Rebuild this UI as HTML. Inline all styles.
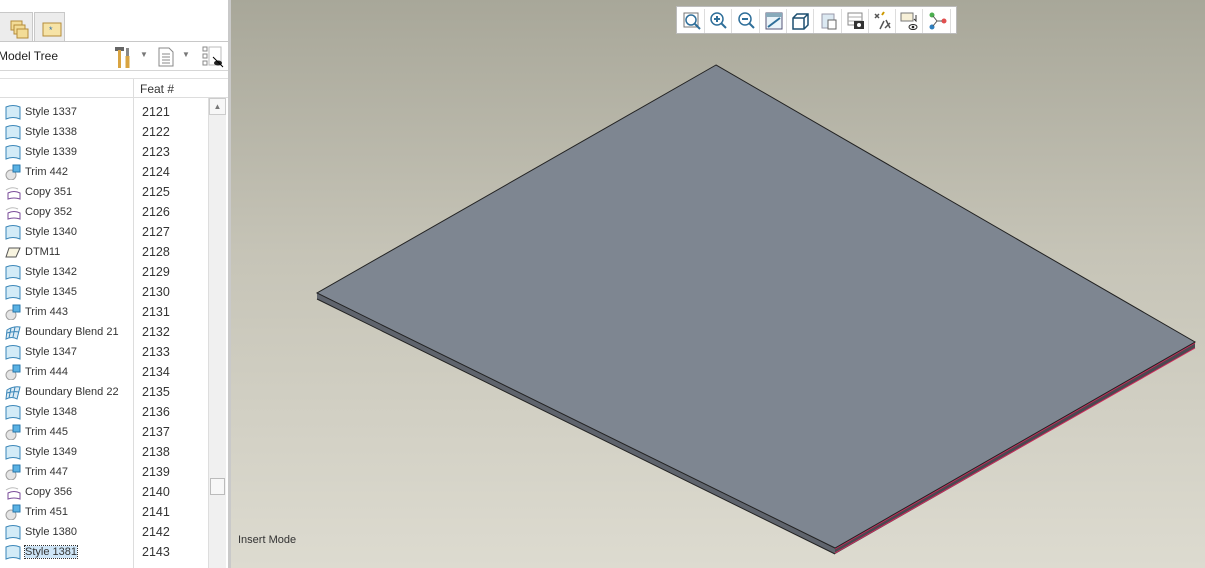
<!DOCTYPE html>
<html><head><meta charset="utf-8"><style>
*{margin:0;padding:0;box-sizing:border-box}
body{width:1205px;height:568px;overflow:hidden;position:relative;font-family:"Liberation Sans",Arial,sans-serif;background:#fff}
#left{position:absolute;left:0;top:0;width:229px;height:568px;background:#fff}
#sep{position:absolute;left:228px;top:0;width:3px;height:568px;background:#c9c9c9}
.tab{position:absolute;top:12px;height:30px;border:1px solid #c8c8c8;border-bottom:none;background:#ececec}
#tb{position:absolute;left:0;top:41px;width:228px;height:30px;border-top:1px solid #c8c8c8;border-bottom:1px solid #d6d6d6;background:#fff}
#hdr{position:absolute;left:0;top:78px;width:228px;height:20px;border-top:1px solid #e0e0e0;border-bottom:1px solid #ddd;background:#fff}
.row{position:absolute;left:0;width:208px;height:20px;font-size:11px;color:#333}
.row svg{position:absolute;left:5px;top:2px}
.row .n{position:absolute;left:25px;top:4px}
.row .f{position:absolute;left:142px;top:3px;font-size:12.5px;color:#333}
#col{position:absolute;left:133px;top:79px;width:1px;height:489px;background:#ddd}
#sb{position:absolute;left:208px;top:98px;width:18px;height:470px;background:#f0f0f0;border-left:1px solid #ddd}
#view{position:absolute;left:231px;top:0;width:974px;height:568px;background:linear-gradient(180deg,#a8a799 0%,#c6c4b7 45%,#dddbd0 100%)}
#tool{position:absolute;left:676px;top:6px;width:281px;height:28px;background:#fff;border:1px solid #bbb}
#tool div{position:absolute;top:2px;width:26px;height:24px;border-right:1px solid #ddd}
</style></head><body>
<div id="left">
<div class="tab" style="left:-2px;width:35px"><svg width="22" height="22" style="margin:6px 0 0 10px" viewBox="0 0 22 22"><rect x="2" y="2" width="11" height="9" fill="#f3dc96" stroke="#b58c3a"/><rect x="5" y="6" width="11" height="9" fill="#f3dc96" stroke="#b58c3a"/><rect x="8" y="10" width="11" height="9" fill="#f3dc96" stroke="#b58c3a"/></svg></div>
<div class="tab" style="left:34px;width:31px"><svg width="20" height="16" style="margin:8px 0 0 7px" viewBox="0 0 20 16"><rect x="1" y="2" width="18" height="13" fill="#f6e3a6" stroke="#b58c3a"/><text x="7" y="12" font-size="9" fill="#2a6fb0">*</text></svg></div>
<div id="tb"><span style="position:absolute;left:-2px;top:7px;font-size:12px;color:#222">Model Tree</span>
<svg style="position:absolute;left:114px;top:3px" width="20" height="24" viewBox="0 0 20 24"><rect x="1" y="2" width="9" height="4" fill="#666"/><rect x="4" y="5" width="3" height="18" fill="#d9a441"/><rect x="12" y="3" width="3" height="9" fill="#888"/><rect x="11.5" y="11" width="4" height="12" fill="#d9a441"/></svg>
<span style="position:absolute;left:140px;top:8px;font-size:8px;color:#777">▼</span>
<svg style="position:absolute;left:158px;top:5px" width="16" height="20" viewBox="0 0 16 20"><path d="M1 1h10l4 4v14H1z" fill="#fff" stroke="#888"/><path d="M4 7h8M4 10h8M4 13h8M4 16h8" stroke="#888"/></svg>
<span style="position:absolute;left:182px;top:8px;font-size:8px;color:#777">▼</span>
<svg style="position:absolute;left:202px;top:4px" width="22" height="22" viewBox="0 0 22 22"><rect x="1" y="1" width="4" height="4" fill="none" stroke="#888"/><rect x="1" y="8" width="4" height="4" fill="none" stroke="#888"/><rect x="1" y="15" width="4" height="4" fill="none" stroke="#888"/><rect x="7" y="1" width="12" height="18" fill="none" stroke="#bbb"/><ellipse cx="16" cy="17" rx="4" ry="2.5" fill="#222"/><path d="M11 11l10 10" stroke="#000"/></svg>
</div>
<div id="hdr"><span style="position:absolute;left:140px;top:3px;font-size:12px;color:#333">Feat #</span></div>
<div id="col"></div>
<div id="sb"><div style="position:absolute;left:0;top:0;width:17px;height:17px;border:1px solid #ccc;background:#f7f7f7;font-size:8px;color:#777;text-align:center;line-height:15px">▲</div><div style="position:absolute;left:1px;top:380px;width:15px;height:17px;border:1px solid #bbb;background:#f7f7f7"></div></div>
<div id="rows"></div>
</div>
<div id="sep"></div>
<div id="view">
<div style="position:absolute;left:7px;top:534px;font-size:11px;color:#333">Insert Mode</div>
</div>
<svg style="position:absolute;left:0;top:0" width="1205" height="568">
<polygon points="317,293 835,548 1195,342 1195,348 835,554 317,299" fill="#5f646d"/>
<polygon points="835,548 1195,342 1195,348 835,554" fill="#4c4850"/>
<path d="M835,549 L1195,343 M835,553 L1195,348" stroke="#d0285a" stroke-width="1"/>
<path d="M317,299 L835,554" stroke="#222" stroke-width="1"/>
<polygon points="716,65 317,293 835,548 1195,342" fill="#7e8691" stroke="#222" stroke-width="1"/>
</svg>
<div id="tool"></div>
<script>
var R=[["s","Style 1337"],["s","Style 1338"],["s","Style 1339"],["t","Trim 442"],["c","Copy 351"],["c","Copy 352"],["s","Style 1340"],["d","DTM11"],["s","Style 1342"],["s","Style 1345"],["t","Trim 443"],["b","Boundary Blend 21"],["s","Style 1347"],["t","Trim 444"],["b","Boundary Blend 22"],["s","Style 1348"],["t","Trim 445"],["s","Style 1349"],["t","Trim 447"],["c","Copy 356"],["t","Trim 451"],["s","Style 1380"],["s","Style 1381"]];
var I={s:'<path d="M1 3Q8 0 15 3L15 15Q8 12 1 15Z" fill="#d3ebf7" stroke="#3a86b8"/>',
t:'<circle cx="6" cy="11" r="5" fill="#e4e4e4" stroke="#a0a0a0"/><rect x="8" y="1" width="7" height="7" fill="#5bb2e4" stroke="#2a78ad"/>',
c:'<path d="M1 6Q7 2 13 5" fill="none" stroke="#bbb"/><path d="M3 9Q9 6 15 9L15 15Q9 13 3 15Z" fill="#fff" stroke="#7a4c9a"/>',
d:'<path d="M4 4H15L11 13H1Z" fill="#f8f4e0" stroke="#555"/>',
b:'<path d="M2 6Q8 2 15 3L12 15Q7 12 1 15Z" fill="#dcebf5" stroke="#3a86b8"/><path d="M6 4L4 14M10 3L8 13M2 9Q8 7 14 8" stroke="#3a86b8" fill="none"/>'};
var h="";R.forEach(function(r,i){var y=102+i*20;var nm=i==22?'<span style="background:#cfe6f8;outline:1px dotted #333">'+r[1]+'</span>':r[1];
h+='<div class="row" style="top:'+y+'px"><svg width="16" height="16" viewBox="0 0 16 16">'+I[r[0]]+'</svg><span class="n">'+nm+'</span><span class="f">'+(2121+i)+'</span></div>';});
document.getElementById("rows").innerHTML=h;
var T=['<circle cx="12" cy="11" r="5" fill="#fff" stroke="#2f6f9a" stroke-width="1.5"/><rect x="5" y="4" width="14" height="14" fill="none" stroke="#777"/><path d="M16 15l5 5" stroke="#2f6f9a" stroke-width="2"/>',
'<circle cx="11" cy="10" r="6" fill="#fff" stroke="#2f6f9a" stroke-width="1.5"/><path d="M8 10h6M11 7v6" stroke="#2f6f9a" stroke-width="2"/><path d="M15 14l5 5" stroke="#2f6f9a" stroke-width="2"/>',
'<circle cx="11" cy="10" r="6" fill="#fff" stroke="#2f6f9a" stroke-width="1.5"/><path d="M8 10h6" stroke="#2f6f9a" stroke-width="2"/><path d="M15 14l5 5" stroke="#2f6f9a" stroke-width="2"/>',
'<rect x="5" y="4" width="16" height="16" fill="#eaf3f9" stroke="#557"/><rect x="5" y="4" width="16" height="4" fill="#8ab"/><path d="M7 18l12-9" stroke="#2f6f9a" stroke-width="2"/>',
'<path d="M5 9l4-4h11v11l-4 4H5z M5 9h11v11 M16 9l4-4" fill="#fff" stroke="#1d4f70" stroke-width="1.5"/>',
'<rect x="6" y="5" width="12" height="14" fill="#dce9f2" stroke="#99a"/><rect x="12" y="11" width="8" height="9" fill="#fff" stroke="#666"/>',
'<rect x="5" y="4" width="14" height="12" fill="#fff" stroke="#888"/><path d="M5 8h14M5 12h14" stroke="#aaa"/><rect x="11" y="12" width="10" height="8" fill="#333"/><circle cx="16" cy="16" r="2" fill="#fff"/>',
'<path d="M5 5l4 4M9 5l-4 4M10 20l4-8M16 11l4 8M15 19l5-5" stroke="#555" stroke-width="1.5"/><path d="M12 6l2-3" stroke="#c90" stroke-width="2"/>',
'<rect x="4" y="4" width="12" height="8" fill="#f7f0d8" stroke="#777"/><path d="M19 6v6l-2-2" stroke="#333" fill="none"/><ellipse cx="16" cy="18" rx="4" ry="2.5" fill="none" stroke="#222"/><circle cx="16" cy="18" r="1.3" fill="#222"/>',
'<circle cx="7" cy="6" r="2.5" fill="#4caf50"/><circle cx="7" cy="18" r="2.5" fill="#2f7fbf"/><circle cx="19" cy="12" r="2.5" fill="#e05050"/><path d="M8 7l4 5-4 5M12 12h5" stroke="#555" fill="none"/>'];
var t="";T.forEach(function(s,i){t+='<div style="left:'+(2+i*27.3)+'px"><svg width="26" height="24" viewBox="0 0 26 24">'+s+'</svg></div>';});
document.getElementById("tool").innerHTML=t;
</script>
</body></html>
